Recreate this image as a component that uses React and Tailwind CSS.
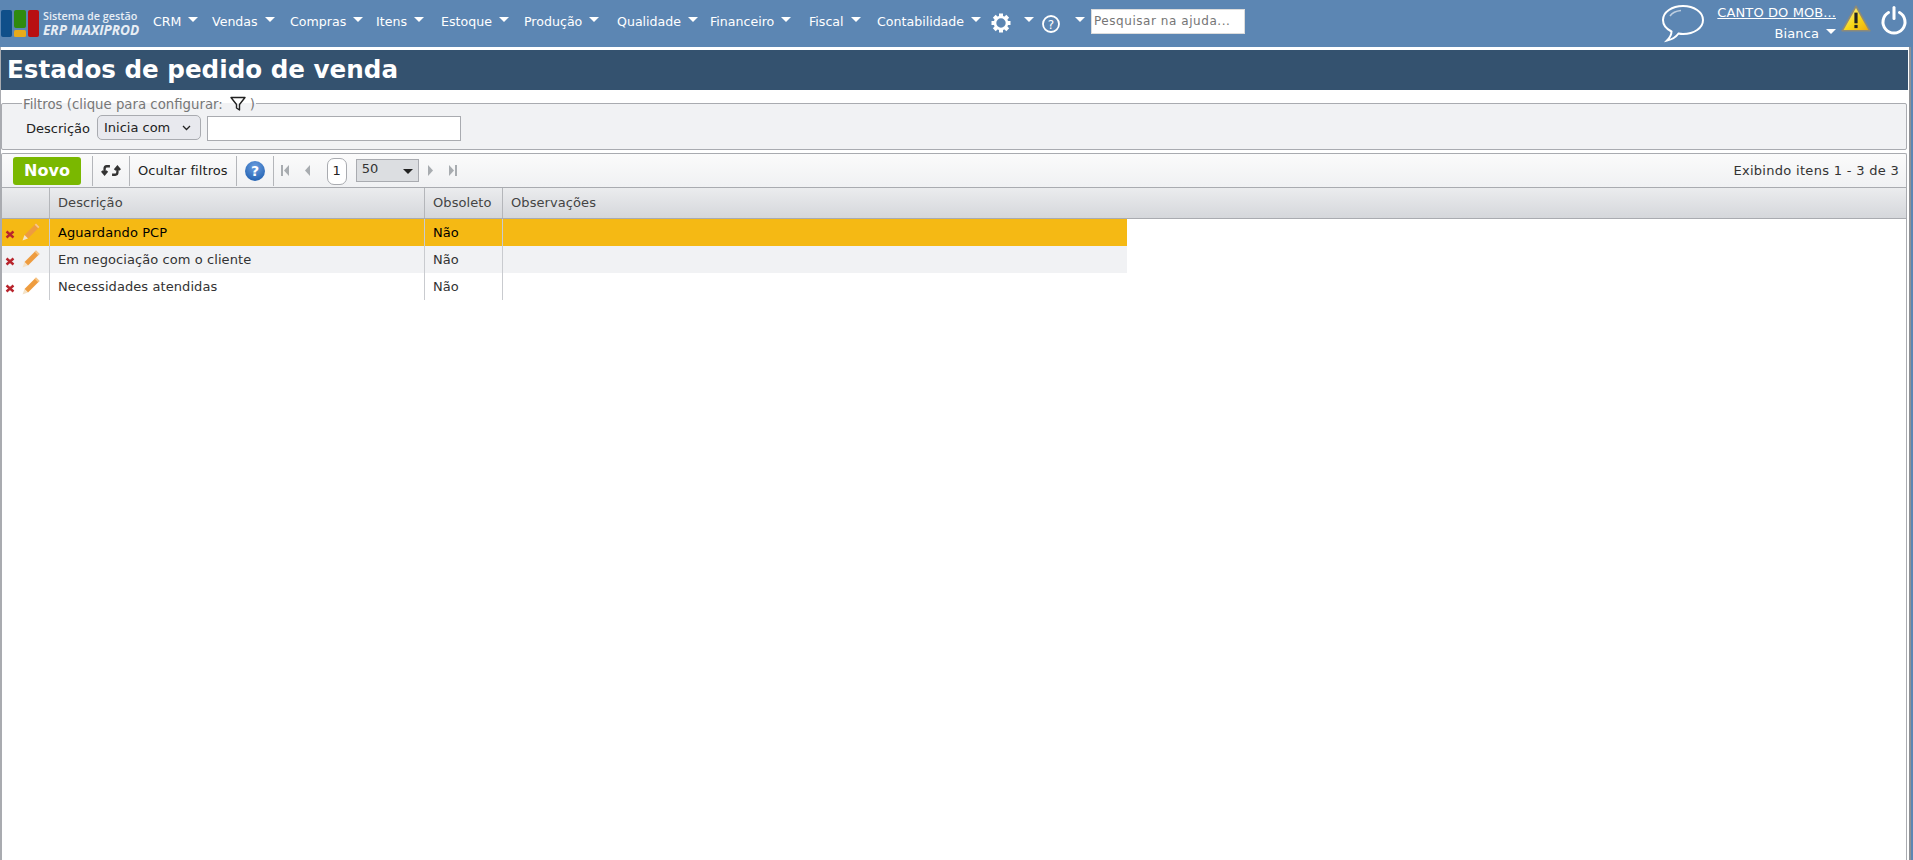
import React from "react";

const menus = [
  { label: "CRM", cls: "w-[59px]" },
  { label: "Vendas", cls: "w-[78px]" },
  { label: "Compras", cls: "w-[86px]" },
  { label: "Itens", cls: "w-[65px]" },
  { label: "Estoque", cls: "w-[83px]" },
  { label: "Produção", cls: "w-[93px]" },
  { label: "Qualidade", cls: "w-[93px]" },
  { label: "Financeiro", cls: "w-[99px]" },
  { label: "Fiscal", cls: "w-[68px]" },
  { label: "Contabilidade", cls: "w-[113px]" },
];

const rows = [
  { name: "Aguardando PCP", bg: "bg-[#f5b914]", text: "text-black" },
  { name: "Em negociação com o cliente", bg: "bg-[#f1f2f4]", text: "text-[#333]" },
  { name: "Necessidades atendidas", bg: "bg-white", text: "text-[#333]" },
];

const gearTeeth = [0, 45, 90, 135, 180, 225, 270, 315];

const Caret = ({ className = "" }) => (
  <span className={`inline-block w-0 h-0 border-x-[5px] border-x-transparent border-t-[5px] border-t-white ${className}`} />
);

const Logo = () => (
  <div className="flex items-center w-[153px] shrink-0 pl-px">
    <svg width="39" height="28" viewBox="0 0 39 28">
      <rect x="0" y="0" width="11" height="27" rx="2" fill="#0f4f8a" />
      <rect x="13" y="0" width="12" height="18" rx="2" fill="#2f8a0e" />
      <rect x="13" y="20" width="12" height="7" rx="1.5" fill="#e8aa1a" />
      <rect x="27" y="0" width="11" height="27" rx="2" fill="#b80f12" />
    </svg>
    <div className="ml-[3px] text-[#e8eef5] font-['Open_Sans',sans-serif] mt-[-1px]">
      <div className="text-[10.8px] leading-[13px] font-semibold">Sistema de gestão</div>
      <div className="text-[13.6px] leading-[16px] font-bold italic">ERP MAXIPROD</div>
    </div>
  </div>
);

const TopBar = () => (
  <div className="h-[47px] shrink-0 bg-[#5c86b3] flex items-center text-white text-[12.6px]">
    <Logo />
    {menus.map((m) => (
      <div key={m.label} className={`${m.cls} flex items-center shrink-0 mt-[-3px]`}>
        <span>{m.label}</span>
        <Caret className="ml-[7px] mt-[-5px]" />
      </div>
    ))}
    <svg width="20" height="20" viewBox="0 0 20 20" className="shrink-0 ml-[1px] mt-[-1px]">
      <circle cx="10" cy="10" r="6" fill="none" stroke="#fff" strokeWidth="2.600" />
      {gearTeeth.map((a) => (
        <rect key={a} x="8" y="0.500" width="4" height="3.500" fill="#fff" transform={`rotate(${a} 10 10)`} />
      ))}
    </svg>
    <Caret className="ml-[13px] mt-[-8px] shrink-0" />
    <svg width="20" height="20" viewBox="0 0 20 20" className="ml-[7px] mt-[1px] shrink-0">
      <circle cx="10" cy="10" r="8" fill="none" stroke="#fff" strokeWidth="1.800" />
      <text x="10" y="14.500" textAnchor="middle" fontSize="12" fill="#fff" fontFamily="DejaVu Sans, sans-serif">?</text>
    </svg>
    <Caret className="ml-[14px] mt-[-8px] shrink-0" />
    <div className="ml-[6px] mt-[-5px] w-[154px] h-[25px] shrink-0 bg-white flex items-center pl-[2px] text-[#757575] text-[12px] tracking-[0.55px] border border-[#dcdcdc]">
      Pesquisar na ajuda...
    </div>
    <div className="flex-1" />
    <svg width="46" height="42" viewBox="0 0 46 42" className="shrink-0 mr-[11px] mt-[-1px]">
      <path
        d="M23 4C12 4 3 10 3 18c0 5 3.500 9 8.500 11.500 0 3-1.500 6-4.500 9 5-1 9-3.500 11.500-7 1.500.3 3 .5 4.500.5 11 0 20-6 20-14S34 4 23 4z"
        fill="none"
        stroke="#fff"
        strokeWidth="2"
      />
      <path d="M10 14c2-3 6-5 11-5.500" fill="none" stroke="#fff" strokeOpacity="0.6" strokeWidth="1.500" />
    </svg>
    <div className="w-[119px] shrink-0 text-right mt-[-2px] text-[13px] tracking-[0.1px]">
      <div className="underline leading-[15px]">CANTO DO MOB...</div>
      <div className="mt-[6px] leading-[15px] flex justify-end items-center">
        Bianca
        <Caret className="ml-[7px] mt-[-3px]" />
      </div>
    </div>
    <svg width="32" height="29" viewBox="0 0 30 27" className="ml-[4px] mt-[-11px] shrink-0">
      <defs>
        <linearGradient id="warn" x1="0" y1="0" x2="1" y2="1">
          <stop offset="0%" stopColor="#fff6b0" />
          <stop offset="55%" stopColor="#f8d818" />
          <stop offset="100%" stopColor="#eda70c" />
        </linearGradient>
      </defs>
      <path d="M15 2 L28 25 L2 25 Z" fill="url(#warn)" stroke="#8d8a78" strokeWidth="1.500" strokeLinejoin="round" />
      <rect x="13.500" y="8" width="3" height="10" fill="#222" />
      <rect x="13.500" y="19.500" width="3" height="3" fill="#222" />
    </svg>
    <svg width="28" height="30" viewBox="0 0 28 30" className="ml-[8px] mr-[5px] mt-[-7px] shrink-0">
      <path d="M8.500 7.500a11 11 0 1 0 11 0" fill="none" stroke="#fff" strokeWidth="3" strokeLinecap="round" />
      <path d="M14 2.500v11" stroke="#fff" strokeWidth="3" strokeLinecap="round" />
    </svg>
  </div>
);

const Filters = () => (
  <fieldset className="mr-[2px] mt-[3px] h-[57px] border border-[#a9abb0] bg-[#f1f2f4] rounded-[2px] px-[22px]">
    <legend className="ml-[-2px] px-[1px] pt-[4px] text-[13.3px] text-[#777] leading-[14px] flex items-center h-[20px]">
      Filtros (clique para configurar:
      <svg width="18" height="18" viewBox="0 0 18 18" className="ml-[6px] mt-[-2px]">
        <path d="M2 2.500h14l-5.500 7v5.500l-3 -2v-3.500z" fill="none" stroke="#222" strokeWidth="1.400" strokeLinejoin="round" />
      </svg>
      <span className="ml-[3px]">)</span>
    </legend>
    <div className="flex items-start text-[13px] text-[#222] mt-[2px] pl-[2px]">
      <span className="mt-[4px] leading-[20px]">Descrição</span>
      <div className="ml-[7px] w-[104px] h-[25px] bg-[#e8e9ee] border border-[#a9abb0] rounded-[5px] pl-[6px] flex items-center justify-between pr-[9px]">
        <span>Inicia com</span>
        <svg width="9" height="6" viewBox="0 0 9 6">
          <path d="M1 1l3.500 3.500L8 1" fill="none" stroke="#222" strokeWidth="1.300" />
        </svg>
      </div>
      <div className="ml-[6px] mt-[1px] w-[254px] h-[25px] bg-white border border-[#a9abb0]" />
    </div>
  </fieldset>
);

const Sep = () => <div className="w-px h-[30px] bg-[#b4b6ba] shrink-0" />;

const PageGlyph = ({ flip, bar }) => (
  <svg width="9" height="11" viewBox="0 0 9 11" className={flip ? "rotate-180" : ""}>
    {bar && <rect x="0" y="0" width="2" height="11" fill="#a8acb0" />}
    <path d="M8 0v11L3 5.500z" fill="#a8acb0" />
  </svg>
);

const Toolbar = () => (
  <div className="mr-[2px] mt-[3px] h-[34px] shrink-0 border border-[#a9abb0] border-b-0 rounded-t-[2px] bg-gradient-to-b from-[#fbfbfb] to-[#f0f1f3] flex items-center text-[13px] text-[#222]">
    <div className="ml-[11px] w-[68px] h-[28px] rounded-[3px] bg-[#7ab800] text-white font-bold text-[16px] flex items-center justify-center">
      Novo
    </div>
    <div className="w-[11px]" />
    <Sep />
    <svg width="20" height="15" viewBox="0 0 18 14" className="mx-[8px] shrink-0">
      <path d="M8 3H5C3.500 3 3 4 3 5.500v4M0.500 7.500 3 10.500 5.500 7.500" fill="none" stroke="#333" strokeWidth="2.200" />
      <path d="M10 11h3c1.500 0 2-1 2-2.500v-4M12.500 6.500 15 3.500 17.500 6.500" fill="none" stroke="#333" strokeWidth="2.200" />
    </svg>
    <Sep />
    <span className="ml-[8px] mr-[8px] tracking-[0.08px]">Ocultar filtros</span>
    <Sep />
    <svg width="20" height="20" viewBox="0 0 20 20" className="mx-[8px] shrink-0">
      <defs>
        <radialGradient id="help" cx="50%" cy="30%" r="75%">
          <stop offset="0%" stopColor="#6c9fe0" />
          <stop offset="100%" stopColor="#1f5fb0" />
        </radialGradient>
      </defs>
      <circle cx="10" cy="10" r="10" fill="url(#help)" />
      <text x="10" y="15" textAnchor="middle" fontSize="14" fontWeight="700" fill="#fff" fontFamily="DejaVu Sans, sans-serif">?</text>
    </svg>
    <Sep />
    <div className="ml-[7px] flex items-center gap-[12px]">
      <PageGlyph bar />
      <PageGlyph />
    </div>
    <div className="ml-[16px] w-[20px] h-[27px] bg-white border border-[#a9abb0] rounded-[7px] flex items-center justify-center text-[13px] mt-[1px]">1</div>
    <div className="ml-[9px] w-[63px] h-[23px] mt-[-1px] bg-[#dcdee1] border border-[#a9abb0] flex items-center justify-between pl-[5px] pr-[5px] text-[#333] text-[13px]">
      <span className="mt-[-2px]">50</span>
      <span className="w-0 h-0 mt-[3px] border-x-[5px] border-x-transparent border-t-[5px] border-t-[#222]" />
    </div>
    <div className="ml-[8px] flex items-center gap-[12px]">
      <PageGlyph flip />
      <PageGlyph flip bar />
    </div>
    <div className="flex-1" />
    <span className="mr-[7px] text-[#333] tracking-[0.3px]">Exibindo itens 1 - 3 de 3</span>
  </div>
);

const Pencil = () => (
  <svg width="18" height="18" viewBox="0 0 18 18" className="ml-[7px] mt-[-2px]">
    <path d="M14 0.500 17.500 4 6 15.500 2.500 12z" fill="#ee9c3f" />
    <path d="M2.500 12 6 15.500 0.500 17.500z" fill="#f4e2c6" />
    <path d="M14 0.500 17.500 4 16.200 5.300 12.700 1.800z" fill="#f7c88c" />
  </svg>
);

const Cross = () => (
  <svg width="10" height="9" viewBox="0 0 10 9" className="ml-[3px] mt-[4px]">
    <path d="M1.500 1.500l7 6M8.500 1.500l-7 6" stroke="#b8242c" strokeWidth="2.400" />
  </svg>
);

const Grid = () => (
  <div className="mr-[2px] flex-1 border-x border-[#a9abb0] bg-white text-[13px] tracking-[0.08px]">
    <div className="h-[32px] flex border-y border-[#a9abb0] bg-gradient-to-b from-[#ebecee] to-[#d5d7db] text-[#444]">
      <div className="w-[48px] border-r border-[#b4b6ba]" />
      <div className="w-[375px] border-r border-[#b4b6ba] pl-[8px] flex items-center">Descrição</div>
      <div className="w-[78px] border-r border-[#b4b6ba] pl-[8px] flex items-center">Obsoleto</div>
      <div className="flex-1 pl-[8px] flex items-center">Observações</div>
    </div>
    {rows.map((r) => (
      <div key={r.name} className={`h-[27px] w-[1125px] flex ${r.bg} ${r.text}`}>
        <div className="w-[48px] border-r border-[#c9cbcf] flex items-center">
          <Cross />
          <Pencil />
        </div>
        <div className="w-[375px] border-r border-[#c9cbcf] pl-[8px] flex items-center">{r.name}</div>
        <div className="w-[78px] border-r border-[#c9cbcf] pl-[8px] flex items-center">Não</div>
        <div className="flex-1" />
      </div>
    ))}
  </div>
);

export default function App() {
  return (
    <div className="h-[860px] w-[1913px] overflow-hidden bg-[#5c86b3] flex flex-col font-['DejaVu_Sans',sans-serif]">
      <TopBar />
      <div className="flex-1 flex flex-col bg-white pt-[3px] border-l border-[#a9abb0] border-r-2 border-r-[#8f9195] mr-[2px]">
        <div className="h-[40px] shrink-0 bg-[#34526f] mr-px flex items-center pl-[6px] text-white font-bold text-[24.6px]">
          Estados de pedido de venda
        </div>
        <Filters />
        <Toolbar />
        <Grid />
      </div>
    </div>
  );
}
